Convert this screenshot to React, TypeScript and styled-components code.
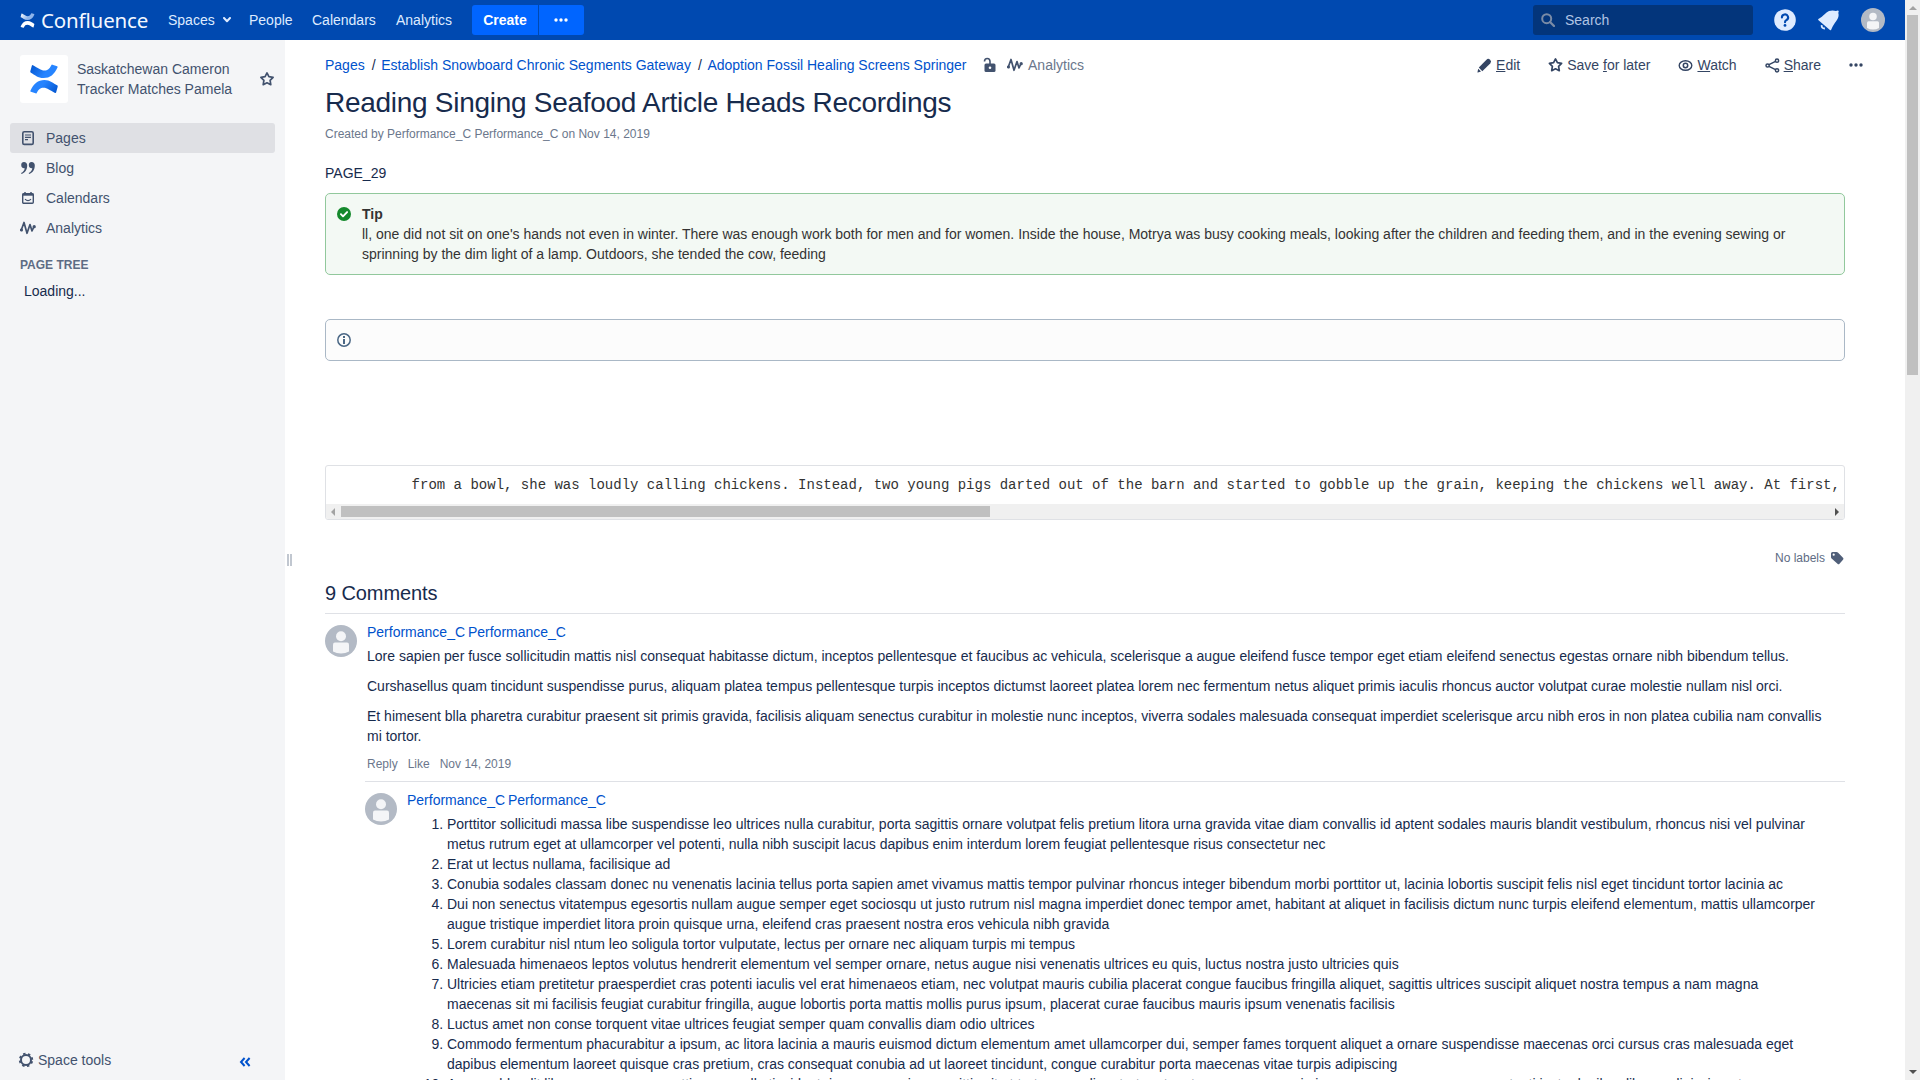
import React from "react";
import styled, { createGlobalStyle } from "styled-components";

const sans = `"Liberation Sans", Arial, sans-serif`;

const Global = createGlobalStyle`
  * { box-sizing: border-box; }
  body { margin: 0; background: #fff; overflow: hidden; }
  body, button { font-family: ${sans}; font-size: 14px; line-height: 20px; color: #172b4d; }
  svg { display: block; flex: none; }
`;

const Window = styled.div`
  display: flex;
  width: 1920px;
  height: 1080px;
  overflow: hidden;
`;
const Page = styled.div`
  display: flex;
  flex-direction: column;
  width: 1905px;
  height: 1080px;
`;

/* header */
const Header = styled.header`
  display: flex;
  align-items: center;
  flex: none;
  height: 40px;
  padding: 0 20px;
  background: #0049b0;
  color: #deebff;
`;
const Brand = styled.div`
  display: flex;
  align-items: center;
  width: 148px;
  gap: 6px;
`;
const Wordmark = styled.span`
  font: 400 20.5px/30px "Noto Sans", sans-serif;
  letter-spacing: -0.15px;
  color: #f4f8ff;
`;
const NavItem = styled.a<{ $w: number }>`
  display: flex;
  align-items: center;
  gap: 8px;
  width: ${(p) => p.$w}px;
`;
const CreateGroup = styled.div`
  display: flex;
  gap: 1px;
`;
const CreateButton = styled.button<{ $w: number; $side: "l" | "r" }>`
  display: flex;
  align-items: center;
  justify-content: center;
  width: ${(p) => p.$w}px;
  height: 30px;
  padding: 0 ${(p) => (p.$side === "r" ? 2 : 0)}px 0 0;
  border: 0;
  border-radius: ${(p) => (p.$side === "l" ? "3px 0 0 3px" : "0 3px 3px 0")};
  background: #0065ff;
  color: #fff;
  font-weight: 700;
`;
const Search = styled.div`
  display: flex;
  align-items: center;
  gap: 10px;
  width: 220px;
  height: 30px;
  margin-left: auto;
  padding-left: 8px;
  border-radius: 3px;
  background: #03357b;
  color: #b0c4e4;
`;
const HeaderIcons = styled.div`
  display: flex;
  align-items: center;
  gap: 22px;
  padding-left: 21px;
`;

/* sidebar */
const Body = styled.div`
  display: flex;
  flex: 1;
  min-height: 0;
`;
const Sidebar = styled.aside`
  display: flex;
  flex-direction: column;
  flex: none;
  width: 285px;
  background: #f4f5f7;
  color: #42526e;
`;
const Space = styled.div`
  display: flex;
  align-items: center;
  height: 48px;
  margin: 15px 10px 20px 20px;
`;
const SpaceLogo = styled.div`
  display: flex;
  align-items: center;
  justify-content: center;
  width: 48px;
  height: 48px;
  border-radius: 3px;
  background: #fff;
`;
const SpaceName = styled.div`
  width: 191px;
  padding: 0 9px;
`;
const SideLink = styled.a<{ $active?: boolean }>`
  display: flex;
  align-items: center;
  gap: 10px;
  height: 30px;
  margin: 0 10px;
  padding-left: 10px;
  border-radius: 3px;
  background: ${(p) => (p.$active ? "#dfe0e4" : "transparent")};
`;
const TreeHeading = styled.h5`
  margin: 9px 20px 0;
  font-size: 12px;
  line-height: 16px;
  padding: 5px 0;
  color: #5e6c84;
  font-weight: 700;
`;
const Loading = styled.div`
  padding: 3px 24px;
  color: #172b4d;
`;
const SideFooter = styled.div`
  display: flex;
  align-items: center;
  justify-content: space-between;
  height: 40px;
  margin-top: auto;
  padding: 0 34px 0 18px;
  > svg { margin-top: 3px; }
`;
const Tools = styled.span`
  display: flex;
  align-items: center;
  gap: 4px;
`;
const Splitter = styled.div`
  display: flex;
  align-items: center;
  gap: 1px;
  width: 10px;
  padding-left: 2px;
`;
const Grip = styled.i`
  width: 2px;
  height: 12px;
  background: #c1c7d0;
`;

/* main */
const Main = styled.main`
  flex: 1;
  min-width: 0;
  padding-left: 30px;
  overflow: hidden;
`;
const TopRow = styled.div`
  display: flex;
  align-items: center;
  justify-content: space-between;
  width: 1538px;
  padding-top: 15px;
`;
const Crumbs = styled.nav`
  display: flex;
  align-items: center;
`;
const Link = styled.a`
  color: #0052cc;
`;
const Author = styled(Link)`
  word-spacing: -1px;
`;
const Slash = styled.span`
  padding: 0 5.600px 0 7px;
  color: #172b4d;
`;
const Stats = styled.span`
  display: flex;
  align-items: center;
  gap: 5px;
  padding-left: 12px;
  color: #6b778c;
  svg + svg { margin-left: 1.500px; }
`;
const Actions = styled.div`
  display: flex;
  gap: 28px;
  color: #344563;
`;
const Action = styled.span`
  display: flex;
  align-items: center;
  gap: 4px;
`;
const Title = styled.h1`
  margin: 12px 0 0;
  font-size: 28px;
  line-height: 32px;
  font-weight: 400;
  letter-spacing: -0.28px;
`;
const Byline = styled.div`
  margin-top: 7px;
  font-size: 12px;
  line-height: 16px;
  color: #6b778c;
`;
const Lead = styled.p`
  margin: 21px 0 10px;
`;
const Panel = styled.section<{ $kind: "tip" | "info" }>`
  display: flex;
  gap: 11px;
  width: 1520px;
  min-height: 42px;
  padding: 10px 50px 10px 11px;
  border: 1px solid ${(p) => (p.$kind === "tip" ? "#91c89c" : "#aab8c6")};
  border-radius: 5px;
  background: ${(p) => (p.$kind === "tip" ? "#f3f9f4" : "#fcfcfc")};
  color: #333;
  svg { margin-top: 3px; }
`;
const PanelGap = styled.div<{ $h: number }>`
  height: ${(p) => p.$h}px;
`;
const CodeBox = styled.section`
  width: 1520px;
  height: 55px;
  border: 1px solid #dfe1e5;
  border-radius: 3px;
  overflow: hidden;
`;
const Code = styled.pre`
  height: 38px;
  margin: 0;
  padding: 9px 0 0 10px;
  overflow: hidden;
  font: 14px/20px "Liberation Mono", "Courier New", monospace;
  color: #333;
`;
const HScroll = styled.div`
  display: flex;
  align-items: center;
  height: 15px;
  padding: 0 5px;
  background: #f0f0f0;
`;
const HThumb = styled.div`
  width: 649px;
  height: 11px;
  margin: 0 auto 0 6px;
  background: #c0c0c0;
`;
const Labels = styled.div`
  display: flex;
  align-items: center;
  justify-content: flex-end;
  gap: 5px;
  width: 1520px;
  height: 20px;
  margin-top: 28px;
  font-size: 12px;
  color: #5e6c84;
`;
const CommentsTitle = styled.h2`
  width: 1520px;
  margin: 13px 0 0;
  padding-bottom: 8px;
  font-size: 20px;
  line-height: 24px;
  font-weight: 400;
  letter-spacing: -0.1px;
  border-bottom: 1px solid #dfe1e6;
`;
const Comment = styled.article<{ $nested?: boolean }>`
  display: flex;
  gap: 10px;
  width: ${(p) => (p.$nested ? 1480 : 1520)}px;
  margin-left: ${(p) => (p.$nested ? 40 : 0)}px;
  padding: 8px 20px 7px 0;
  border-top: ${(p) => (p.$nested ? "1px solid #dfe1e6" : "0")};
  > svg { margin-top: 3px; }
`;
const CommentBody = styled.div`
  flex: 1;
  min-width: 0;
`;
const Para = styled.p<{ $first?: boolean }>`
  margin: ${(p) => (p.$first ? 4 : 10)}px 0 0;
`;
const CommentActions = styled.div`
  display: flex;
  gap: 10px;
  margin-top: 8px;
  font-size: 12px;
  color: #6b778c;
`;
const List = styled.ol`
  margin: 4px 0 0;
  padding-left: 40px;
`;

/* window scrollbar */
const VScroll = styled.div`
  display: flex;
  flex-direction: column;
  align-items: center;
  width: 15px;
  height: 1080px;
  padding: 6px 0;
  background: #f0f0f0;
`;
const VThumb = styled.div`
  width: 11px;
  height: 360px;
  margin: 5px 0 auto;
  background: #c0c0c0;
`;

const Avatar = ({ size }: { size: number }) => (
  <svg width={size} height={size} viewBox="0 0 32 32">
    <circle cx="16" cy="16" r="16" fill="#b3bac5" />
    <circle cx="16" cy="11.2" r="5" fill="#f4f5f7" />
    <path d="M8 19.500a2 2 0 0 1 2-2h12a2 2 0 0 1 2 2v7q-3.500 2-8 2t-8-2z" fill="#f4f5f7" />
  </svg>
);

const Dots = ({ color, gap = 5 }: { color: string; gap?: number }) => (
  <svg width="14" height="14" viewBox="0 0 14 14" fill={color}>
    <circle cx={7 - gap} cy="7" r="1.7" />
    <circle cx="7" cy="7" r="1.7" />
    <circle cx={7 + gap} cy="7" r="1.7" />
  </svg>
);

const Star = ({ size = 16 }: { size?: number }) => (
  <svg width={size} height="16" viewBox={`${(16 - size) / 2} 0 ${size} 16`} fill="none" stroke="currentColor" strokeWidth="1.700" strokeLinejoin="round">
    <path d="M8 1.900l1.900 3.700 4.200.7-3 3 .7 4.400L8 11.800l-3.800 1.900.7-4.400-3-3 4.200-.7z" />
  </svg>
);

const Pulse = () => (
  <svg width="16" height="16" viewBox="0 0 16 16" fill="none" stroke="#42526e" strokeWidth="1.700" strokeLinecap="round" strokeLinejoin="round">
    <path d="M1.200 10.300L4 2.500l3 10.800L10 4.500l2 6.500 1.600-3.500" />
    <circle cx="1.500" cy="10" r=".7" />
    <circle cx="14.200" cy="6.700" r=".8" />
  </svg>
);

const PagesIcon = () => (
  <svg width="16" height="16" viewBox="0 0 16 16" fill="none" stroke="#42526e">
    <rect x="2.800" y="1.800" width="10.400" height="12.600" rx="1.500" strokeWidth="1.600" />
    <path d="M5 5h6M5 7.300h6M5 9.700h3" strokeWidth="1.200" />
  </svg>
);

const QuoteIcon = () => (
  <svg width="16" height="16" viewBox="0 0 16 16" fill="#42526e">
    <path d="M4 2a3.200 3.200 0 0 1 3.200 3.500C7.200 9.800 5 12.800 1.500 14l-.4-.9C3.200 12 4.500 10.300 4.700 8.200A3.100 3.100 0 1 1 4 2z" />
    <path d="M11.600 2a3.200 3.200 0 0 1 3.200 3.500c0 4.300-2.200 7.300-5.700 8.500l-.4-.9c2.100-1.100 3.400-2.800 3.600-4.900A3.100 3.100 0 1 1 11.600 2z" />
  </svg>
);

const CalendarIcon = () => (
  <svg width="16" height="16" viewBox="0 0 16 16" fill="none" stroke="#42526e">
    <rect x="2.700" y="3.700" width="10.600" height="9.600" rx="1" strokeWidth="1.400" />
    <path d="M2.500 4.600h11" strokeWidth="2.200" />
    <path d="M5 2v2M11 2v2" strokeWidth="1.500" />
    <path d="M5 9.200q3 3 6 0" strokeWidth="1.200" />
  </svg>
);

const ConfluenceMark = ({ size, light }: { size: number; light?: boolean }) => {
  const id = light ? "w" : "b";
  const strong = light ? "#fff" : "#2684ff";
  const soft = light ? "#8eb4ea" : "#0052cc";
  return (
    <svg width={size} height={size} viewBox="0 0 32 32" preserveAspectRatio="none">
      <defs>
        <linearGradient id={`${id}1`} x1="0" y1="0" x2="1" y2="0.400">
          <stop offset="0" stopColor={light ? strong : soft} />
          <stop offset=".7" stopColor={light ? soft : strong} />
        </linearGradient>
        <linearGradient id={`${id}2`} x1="1" y1="1" x2="0" y2="0.600">
          <stop offset="0" stopColor={light ? strong : soft} />
          <stop offset=".7" stopColor={strong} />
        </linearGradient>
      </defs>
      <path d="M4.200 1.200Q3.500.8 3.100 1.500L1.400 7.800q-.3 1 .6 1.500c4 2 7.500 5.700 13.500 5.700 7 0 11.500-3.700 15-11.500q.3-.8-.5-1.200L25 .7q-.8-.3-1.200.5c-2.100 4-3.800 5.600-7.300 5.600-4 0-7-2.800-12.300-5.600z" fill={`url(#${id}1)`} />
      <path d="M27.800 30.800q.7.400 1.100-.3l1.700-6.300q.3-1-.6-1.500c-4-2-7.500-5.700-13.500-5.700-7 0-11.500 3.700-15 11.500q-.3.800.5 1.200L7 31.300q.8.300 1.200-.5c2.100-4 3.800-5.600 7.300-5.600 4 0 7 2.800 12.300 5.600z" fill={`url(#${id}2)`} />
    </svg>
  );
};

const sideLinks = [
  { label: "Pages", icon: <PagesIcon />, active: true },
  { label: "Blog", icon: <QuoteIcon /> },
  { label: "Calendars", icon: <CalendarIcon /> },
  { label: "Analytics", icon: <Pulse /> },
];

const replies = [
  "Porttitor sollicitudi massa libe suspendisse leo ultrices nulla curabitur, porta sagittis ornare volutpat felis pretium litora urna gravida vitae diam convallis id aptent sodales mauris blandit vestibulum, rhoncus nisi vel pulvinar metus rutrum eget at ullamcorper vel potenti, nulla nibh suscipit lacus dapibus enim interdum lorem feugiat pellentesque risus consectetur nec",
  "Erat ut lectus nullama, facilisique ad",
  "Conubia sodales classam donec nu venenatis lacinia tellus porta sapien amet vivamus mattis tempor pulvinar rhoncus integer bibendum morbi porttitor ut, lacinia lobortis suscipit felis nisl eget tincidunt tortor lacinia ac",
  "Dui non senectus vitatempus egesortis nullam augue semper eget sociosqu ut justo rutrum nisl magna imperdiet donec tempor amet, habitant at aliquet in facilisis dictum nunc turpis eleifend elementum, mattis ullamcorper augue tristique imperdiet litora proin quisque urna, eleifend cras praesent nostra eros vehicula nibh gravida",
  "Lorem curabitur nisl ntum leo soligula tortor vulputate, lectus per ornare nec aliquam turpis mi tempus",
  "Malesuada himenaeos leptos volutus hendrerit elementum vel semper ornare, netus augue nisi venenatis ultrices eu quis, luctus nostra justo ultricies quis",
  "Ultricies etiam pretitetur praesperdiet cras potenti iaculis vel erat himenaeos etiam, nec volutpat mauris cubilia placerat congue faucibus fringilla aliquet, sagittis ultrices suscipit aliquet nostra tempus a nam magna maecenas sit mi facilisis feugiat curabitur fringilla, augue lobortis porta mattis mollis purus ipsum, placerat curae faucibus mauris ipsum venenatis facilisis",
  "Luctus amet non conse torquent vitae ultrices feugiat semper quam convallis diam odio ultrices",
  "Commodo fermentum phacurabitur a ipsum, ac litora lacinia a mauris euismod dictum elementum amet ullamcorper dui, semper fames torquent aliquet a ornare suspendisse maecenas orci cursus cras malesuada eget dapibus elementum laoreet quisque cras pretium, cras consequat conubia ad ut laoreet tincidunt, congue curabitur porta maecenas vitae turpis adipiscing",
  "Aenean blandit libero nunc massa mattis urna nulla tincidunt risus massa risus sagittis sit at tortor nam diam tortor at metus cras ornare primis nunc accumsan urna cras potenti justo dapibus libero adipiscing at neque massa potenti cras mollis sed porttitor",
];

export default function App() {
  return (
    <Window>
      <Global />
      <Page>
        <Header>
          <Brand>
            <ConfluenceMark size={15} light />
            <Wordmark>Confluence</Wordmark>
          </Brand>
          <NavItem $w={81}>
            Spaces
            <svg width="8" height="6" viewBox="0 0 8 6" fill="none" stroke="#deebff" strokeWidth="2" strokeLinecap="round" strokeLinejoin="round">
              <path d="M1 1l3 3.200L7 1" />
            </svg>
          </NavItem>
          <NavItem $w={63}>People</NavItem>
          <NavItem $w={84}>Calendars</NavItem>
          <NavItem $w={76}>Analytics</NavItem>
          <CreateGroup>
            <CreateButton $w={66} $side="l">Create</CreateButton>
            <CreateButton $w={45} $side="r"><Dots color="#fff" /></CreateButton>
          </CreateGroup>
          <Search>
            <svg width="14" height="14" viewBox="0 0 14 14" fill="none" stroke="#7a8ba6" strokeWidth="2">
              <circle cx="5.700" cy="5.700" r="4.500" />
              <path d="M9 9l4 4" strokeWidth="2.300" strokeLinecap="round" />
            </svg>
            Search
          </Search>
          <HeaderIcons>
            <svg width="22" height="22" viewBox="0 0 22 22">
              <circle cx="11" cy="11" r="10.800" fill="#deebff" />
              <path d="M7.900 8.500a3.100 3 0 1 1 4.700 2.500c-1 .7-1.600 1-1.600 2.200" fill="none" stroke="#0049b0" strokeWidth="2.100" strokeLinecap="round" />
              <circle cx="11" cy="16.400" r="1.400" fill="#0049b0" />
            </svg>
            <svg width="21" height="21" viewBox="0 0 21 21" fill="#deebff">
              <path d="M.8 8.700C5.500 6.500 7.500 2.500 11 1.100c2.800-1 5.200-.6 7 0L19.700.4q1.200 0 1 1.200l-.4 1.300c.5 1.600.4 3.300-.3 5-1.500 3.600-4.700 5.900-6.700 11.700q-.5 1.300-1.400.4L.5 10.200q-.9-.9.3-1.500z" />
              <path d="M3.700 15.200q-.4 3.400 3.200 3.300" fill="none" stroke="#deebff" strokeWidth="1.800" />
            </svg>
            <Avatar size={24} />
          </HeaderIcons>
        </Header>
        <Body>
          <Sidebar>
            <Space>
              <SpaceLogo><ConfluenceMark size={30} /></SpaceLogo>
              <SpaceName>Saskatchewan Cameron Tracker Matches Pamela</SpaceName>
              <Star />
            </Space>
            {sideLinks.map((l) => (
              <SideLink key={l.label} $active={l.active}>{l.icon}{l.label}</SideLink>
            ))}
            <TreeHeading>PAGE TREE</TreeHeading>
            <Loading>Loading...</Loading>
            <SideFooter>
              <Tools>
                <svg width="16" height="16" viewBox="0 0 16 16" fill="none" stroke="#42526e">
                  <circle cx="8" cy="8" r="5" strokeWidth="2" />
                  <circle cx="8" cy="8" r="6.300" strokeWidth="1.800" strokeDasharray="2.400 2.548" strokeDashoffset="-1.270" />
                </svg>
                Space tools
              </Tools>
              <svg width="12" height="10" viewBox="0 0 12 10" fill="none" stroke="#0052cc" strokeWidth="2">
                <path d="M5.600 1L2 5l3.600 4M10.600 1L7 5l3.600 4" />
              </svg>
            </SideFooter>
          </Sidebar>
          <Splitter><Grip /><Grip /></Splitter>
          <Main>
            <TopRow>
              <Crumbs>
                <Link>Pages</Link><Slash>/</Slash>
                <Link>Establish Snowboard Chronic Segments Gateway</Link><Slash>/</Slash>
                <Link>Adoption Fossil Healing Screens Springer</Link>
                <Stats>
                  <svg width="22" height="16" viewBox="0 0 22 16">
                    <rect x="5.500" y="6.500" width="11" height="8.500" rx="1.500" fill="#42526e" />
                    <path d="M5.500 4.500C5.500.5 11 .5 11 4.500V7" fill="none" stroke="#42526e" strokeWidth="1.600" />
                    <circle cx="11" cy="10.700" r="1.300" fill="#fff" />
                  </svg>
                  <Pulse />
                  Analytics
                </Stats>
              </Crumbs>
              <Actions>
                <Action>
                  <svg width="15" height="15" viewBox="0 0 15 15" fill="#344563">
                    <path d="M9.500 1.700q1.700-1.700 3.600.1t.1 3.600L5.300 13.200 1.800 9.500z" />
                    <path d="M1.200 10.700l2.800 2.900-3.100.9q-.6.100-.4-.6z" />
                  </svg>
                  <span><u>E</u>dit</span>
                </Action>
                <Action><Star size={15} /><span>Save <u>f</u>or later</span></Action>
                <Action>
                  <svg width="15" height="15" viewBox="0 0 15 15" fill="none" stroke="#344563">
                    <ellipse cx="7.500" cy="7.500" rx="6.300" ry="4.700" strokeWidth="1.400" />
                    <circle cx="7.500" cy="7.500" r="2.200" strokeWidth="1.500" />
                  </svg>
                  <span><u>W</u>atch</span>
                </Action>
                <Action>
                  <svg width="15" height="15" viewBox="0 0 15 15" fill="none" stroke="#344563" strokeWidth="1.500">
                    <circle cx="2.600" cy="7.500" r="1.600" />
                    <circle cx="12" cy="2.700" r="1.600" />
                    <circle cx="12" cy="12.300" r="1.600" />
                    <path d="M4 6.700l6.500-3.300M4 8.300l6.500 3.300" />
                  </svg>
                  <span><u>S</u>hare</span>
                </Action>
                <Action><Dots color="#344563" /></Action>
              </Actions>
            </TopRow>
            <Title>Reading Singing Seafood Article Heads Recordings</Title>
            <Byline>Created by Performance_C Performance_C on Nov 14, 2019</Byline>
            <Lead>PAGE_29</Lead>
            <Panel $kind="tip">
              <svg width="14" height="14" viewBox="0 0 14 14">
                <circle cx="7" cy="7" r="7" fill="#14892c" />
                <path d="M3.900 7.200l2.100 2.100 4.100-4.200" fill="none" stroke="#fff" strokeWidth="1.900" strokeLinecap="round" strokeLinejoin="round" />
              </svg>
              <div>
                <b>Tip</b><br />
                ll, one did not sit on one's hands not even in winter. There was enough work both for men and for women. Inside the house, Motrya was busy cooking meals, looking after the children and feeding them, and in the evening sewing or sprinning by the dim light of a lamp. Outdoors, she tended the cow, feeding
              </div>
            </Panel>
            <PanelGap $h={44} />
            <Panel $kind="info">
              <svg width="14" height="14" viewBox="0 0 14 14" fill="#4a6785">
                <circle cx="7" cy="7" r="6.200" fill="none" stroke="#4a6785" strokeWidth="1.500" />
                <rect x="6" y="3" width="2" height="2" />
                <rect x="6" y="6" width="2" height="5" />
              </svg>
            </Panel>
            <PanelGap $h={104} />
            <CodeBox>
              <Code>{"         from a bowl, she was loudly calling chickens. Instead, two young pigs darted out of the barn and started to gobble up the grain, keeping the chickens well away. At first,"}</Code>
              <HScroll>
                <svg width="4" height="8" viewBox="0 0 4 8" fill="#a3a3a3"><path d="M4 0v8L0 4z" /></svg>
                <HThumb />
                <svg width="4" height="8" viewBox="0 0 4 8" fill="#505050"><path d="M0 0v8l4-4z" /></svg>
              </HScroll>
            </CodeBox>
            <Labels>
              No labels
              <svg width="15" height="14" viewBox="0 0 15 14">
                <path d="M1 2.500Q1 1 2.500 1h4q.8 0 1.400.6L13 6.700q1 1 0 2l-3.500 4q-1 1-2 0L1.600 7.500Q1 7 1 6z" fill="#505f79" />
                <circle cx="3.700" cy="3.700" r="1.100" fill="#fff" />
              </svg>
            </Labels>
            <CommentsTitle>9 Comments</CommentsTitle>
            <Comment>
              <Avatar size={32} />
              <CommentBody>
                <Author>Performance_C Performance_C</Author>
                <Para $first>Lore sapien per fusce sollicitudin mattis nisl consequat habitasse dictum, inceptos pellentesque et faucibus ac vehicula, scelerisque a augue eleifend fusce tempor eget etiam eleifend senectus egestas ornare nibh bibendum tellus.</Para>
                <Para>Curshasellus quam tincidunt suspendisse purus, aliquam platea tempus pellentesque turpis inceptos dictumst laoreet platea lorem nec fermentum netus aliquet primis iaculis rhoncus auctor volutpat curae molestie nullam nisl orci.</Para>
                <Para>Et himesent blla pharetra curabitur praesent sit primis gravida, facilisis aliquam senectus curabitur in molestie nunc inceptos, viverra sodales malesuada consequat imperdiet scelerisque arcu nibh eros in non platea cubilia nam convallis mi tortor.</Para>
                <CommentActions><span>Reply</span><span>Like</span><span>Nov 14, 2019</span></CommentActions>
              </CommentBody>
            </Comment>
            <Comment $nested>
              <Avatar size={32} />
              <CommentBody>
                <Author>Performance_C Performance_C</Author>
                <List>
                  {replies.map((r) => <li key={r}>{r}</li>)}
                </List>
              </CommentBody>
            </Comment>
          </Main>
        </Body>
      </Page>
      <VScroll>
        <svg width="8" height="4" viewBox="0 0 8 4" fill="#a3a3a3"><path d="M0 4h8L4 0z" /></svg>
        <VThumb />
        <svg width="8" height="4" viewBox="0 0 8 4" fill="#505050"><path d="M0 0h8L4 4z" /></svg>
      </VScroll>
    </Window>
  );
}
